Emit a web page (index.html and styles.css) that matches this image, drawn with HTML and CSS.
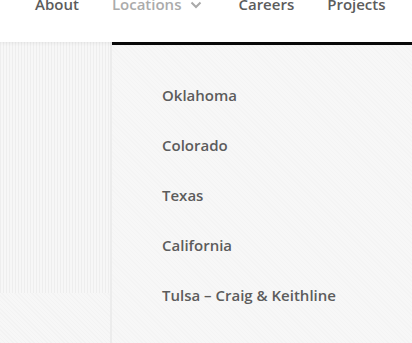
FILE: index.html
```html
<!DOCTYPE html>
<html lang="en">
<head>
    <meta charset="UTF-8">
    <meta name="viewport" content="width=device-width, initial-scale=1.0">
    <title>Locations</title>
    <link rel="stylesheet" href="styles.css">
</head>
<body>
    <!-- Шапка с навигацией -->
    <header class="site-header">
        <nav class="main-nav">
            <a class="nav-link" href="#">About</a>
            <a class="nav-link nav-link-active" href="#">Locations
                <svg class="nav-chevron" width="12" height="8" viewBox="0 0 12 8">
                    <path d="M1.5 1.5 L6 6 L10.5 1.5" fill="none" stroke="#a9a9a9" stroke-width="2"/>
                </svg>
            </a>
            <a class="nav-link" href="#">Careers</a>
            <a class="nav-link" href="#">Projects</a>
        </nav>
    </header>

    <div class="page-body">
        <aside class="side-panel">
            <div class="side-stripes"></div>
            <div class="side-rest"></div>
        </aside>

        <!-- Выпадающее меню -->
        <ul class="dropdown">
            <li><a href="#">Oklahoma</a></li>
            <li><a href="#">Colorado</a></li>
            <li><a href="#">Texas</a></li>
            <li><a href="#">California</a></li>
            <li><a href="#">Tulsa – Craig &amp; Keithline</a></li>
        </ul>
    </div>
</body>
</html>
```

FILE: styles.css
```css
html, body {
    margin: 0;
    padding: 0;
    height: 100%;
    overflow: hidden;
}
body {
    font-family: "Open Sans", "Liberation Sans", sans-serif;
    background-color: #f4f4f4;
}
.site-header {
    height: 42px;
    background-color: #fff;
    box-shadow: 0 1px 4px rgba(0, 0, 0, 0.07);
    position: relative;
    z-index: 1;
    overflow: hidden;
}
.main-nav {
    display: flex;
    margin-top: -6px;
    padding-left: 35px;
}
.nav-link {
    display: flex;
    align-items: center;
    font-size: 15px;
    font-weight: 600;
    line-height: 20px;
    color: #5c5c5c;
    text-decoration: none;
    margin-right: 33px;
}
.nav-link-active {
    color: #ababab;
    margin-right: 36px;
}
.nav-chevron {
    margin-left: 9px;
    margin-top: 1px;
}
.page-body {
    display: flex;
    height: 301px;
}
.side-panel {
    width: 110px;
    display: flex;
    flex-direction: column;
    border-right: 2px solid #ececec;
}
.side-stripes {
    height: 251px;
    background: repeating-linear-gradient(90deg, #eeeeee 0 1px, #f7f7f7 1px 3px);
}
.side-rest {
    flex: 1;
    background: repeating-linear-gradient(45deg, #f3f3f3 0 1px, #f7f7f7 1px 3px);
}
.dropdown {
    flex: 1;
    list-style: none;
    margin: 0;
    padding: 25px 0 0 50px;
    border-top: 3px solid #0a0a0a;
    background: repeating-linear-gradient(45deg, #f4f4f4 0 1px, #f7f7f7 1px 3px);
}
.dropdown li {
    padding: 15px 0;
    line-height: 20px;
}
.dropdown a {
    font-size: 15px;
    font-weight: 600;
    color: #5c5c5c;
    text-decoration: none;
}
```
